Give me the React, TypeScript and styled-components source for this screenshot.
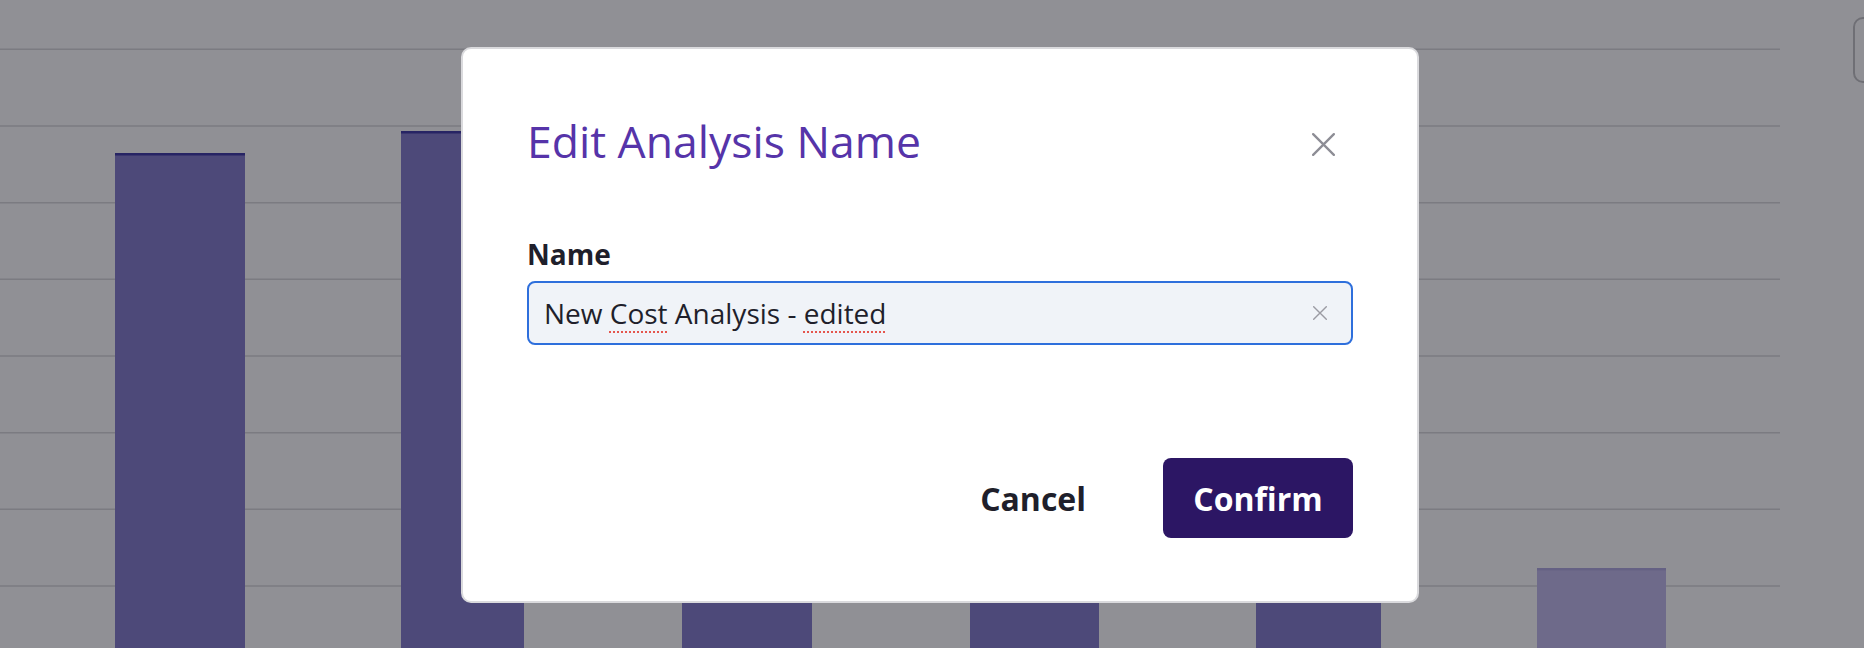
import React from 'react';
import styled, { createGlobalStyle } from 'styled-components';

const GlobalStyle = createGlobalStyle`
  html, body {
    margin: 0;
    padding: 0;
  }
  body {
    width: 1864px;
    height: 648px;
    overflow: hidden;
    background: #ffffff;
    font-family: "Open Sans", "Noto Sans", "Liberation Sans", sans-serif;
  }
`;

const textColor = '#1f1f2b';
const titleColor = '#5634a9';
const brandDark = '#2c1664';

// chart data (colours are the ones under the dimmed overlay)
const gridLines = [49.3, 126, 202.7, 279.3, 356, 432.7, 509.3, 586];
const bars = [
  { x: 115, width: 130, top: 153, faded: false },
  { x: 401, width: 123, top: 131, faded: false },
  { x: 682, width: 130, top: 290, faded: false },
  { x: 970, width: 129, top: 300, faded: false },
  { x: 1256, width: 125, top: 320, faded: false },
  { x: 1537, width: 129, top: 568, faded: true },
];

const Page = styled.div`
  display: flex;
  width: 1864px;
  height: 648px;
`;

const ChartPanel = styled.div`
  width: 1790px;
  height: 648px;
  flex-shrink: 0;
`;

const SideBar = styled.div`
  flex: 1;
  padding: 17px 0 0 63px;
`;

const ToolButton = styled.div`
  width: 60px;
  height: 62px;
  border: 2px solid #bdbdbf;
  border-radius: 10px;
  background: #ffffff;
`;

const Overlay = styled.div`
  position: fixed;
  inset: 0;
  background: rgba(33, 33, 43, 0.5);
  display: flex;
  align-items: center;
  justify-content: center;
  padding: 2px 0 0 16px;
`;

const Modal = styled.div`
  width: 958px;
  box-sizing: border-box;
  background: #ffffff;
  border: 2px solid #dadadd;
  border-radius: 10px;
  padding: 65px 64px 63px 64px;
  display: flex;
  flex-direction: column;
`;

const Header = styled.div`
  display: flex;
  align-items: center;
  justify-content: space-between;
`;

const Title = styled.h2`
  margin: 0;
  padding-top: 2px;
  font-size: 44.5px;
  line-height: 50px;
  font-weight: 400;
  color: ${titleColor};
`;

const CloseButton = styled.button`
  width: 40px;
  height: 40px;
  margin: 8px 10px 0 0;
  padding: 0;
  border: none;
  background: none;
  display: flex;
  align-items: center;
  justify-content: center;
  color: #8d8d95;
  cursor: pointer;
`;

const Label = styled.label`
  display: block;
  margin-top: 71px;
  font-size: 28px;
  line-height: 34px;
  font-weight: 700;
  color: ${textColor};
`;

const Field = styled.div`
  margin-top: 10px;
  height: 64px;
  box-sizing: border-box;
  border: 2px solid #2e6fdc;
  border-radius: 8px;
  background: #f0f3f8;
  display: flex;
  align-items: center;
  padding: 0 24px 0 15px;
`;

const FieldText = styled.div`
  flex: 1;
  font-size: 28px;
  color: ${textColor};
  white-space: nowrap;
`;

const Misspelled = styled.span`
  text-decoration: underline dotted #e5564d;
  text-decoration-thickness: 2px;
  text-underline-offset: 7px;
`;

const ClearButton = styled.button`
  width: 14px;
  height: 14px;
  padding: 0;
  border: none;
  background: none;
  display: flex;
  color: #9b9ba3;
  cursor: pointer;
`;

const Footer = styled.div`
  margin-top: 113px;
  display: flex;
  justify-content: flex-end;
  align-items: center;
  gap: 44px;
`;

const Button = styled.button<{ $primary?: boolean }>`
  height: 80px;
  width: ${(p) => (p.$primary ? '190px' : 'auto')};
  padding: ${(p) => (p.$primary ? '0' : '0 33px')};
  border: none;
  border-radius: 8px;
  font-family: inherit;
  font-size: 32px;
  font-weight: 700;
  color: ${(p) => (p.$primary ? '#ffffff' : textColor)};
  background: ${(p) => (p.$primary ? brandDark : 'transparent')};
  cursor: pointer;
`;

const Chart: React.FC = () => (
  <svg width={1790} height={648} viewBox="0 0 1790 648">
    {gridLines.map((y) => (
      <line key={y} x1={0} x2={1780} y1={y} y2={y} stroke="#d4d4d7" strokeWidth={1.5} />
    ))}
    {bars.map((b) => (
      <g key={b.x}>
        <rect x={b.x} y={b.top} width={b.width} height={648 - b.top} fill={b.faded ? '#bbb3e9' : '#7971c7'} />
        <rect x={b.x} y={b.top} width={b.width} height={2.5} fill={b.faded ? '#a9a1dc' : '#2d279c'} />
      </g>
    ))}
  </svg>
);

const XIcon: React.FC<{ size: number; stroke: number }> = ({ size, stroke }) => (
  <svg width={size} height={size} viewBox="0 0 20 20" fill="none">
    <path d="M1 1L19 19M19 1L1 19" stroke="currentColor" strokeWidth={stroke} strokeLinecap="round" />
  </svg>
);

const App: React.FC = () => {
  return (
    <>
      <GlobalStyle />
      <Page>
        <ChartPanel>
          <Chart />
        </ChartPanel>
        <SideBar>
          <ToolButton />
        </SideBar>
      </Page>
      <Overlay>
        <Modal>
          <Header>
            <Title>Edit Analysis Name</Title>
            <CloseButton aria-label="Close">
              <XIcon size={23} stroke={2} />
            </CloseButton>
          </Header>
          <Label>Name</Label>
          <Field>
            <FieldText>
              New <Misspelled>Cost</Misspelled> Analysis - <Misspelled>edited</Misspelled>
            </FieldText>
            <ClearButton aria-label="Clear">
              <XIcon size={14} stroke={2} />
            </ClearButton>
          </Field>
          <Footer>
            <Button>Cancel</Button>
            <Button $primary>Confirm</Button>
          </Footer>
        </Modal>
      </Overlay>
    </>
  );
};

export default App;
